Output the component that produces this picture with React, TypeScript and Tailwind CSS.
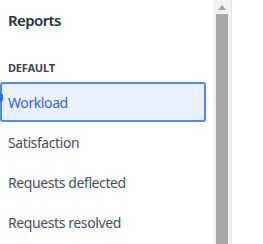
export default function App() {
  const items = ["Satisfaction", "Requests deflected", "Requests resolved"];
  return (
    <div
      className="flex h-[244px] w-[263px] overflow-hidden bg-white"
      style={{ fontFamily: '"Noto Sans", "Open Sans", sans-serif' }}
    >
      <div className="flex w-[213px] shrink-0 flex-col">
        <div className="px-2 pt-[10px] text-[15px] font-semibold leading-[20px] tracking-[-0.6px] text-[#26323f]">Reports</div>
        <div className="px-2 pt-[30px] text-[11px] font-bold leading-[16px] tracking-[-0.2px] text-[#3a4555]">DEFAULT</div>
        <div className="pt-[6px] pr-[7px]">
          <div className="relative flex h-[40px] items-center rounded-[3px] border-2 border-[#4a8cf7] bg-[#e8f1fd] pl-[6px] text-[14px] tracking-[-0.4px] text-[#3d63dd]">
            <span className="absolute left-[-2px] top-[9px] h-[9px] w-[3px] rounded-r-full bg-[#2f6fe6]" />
            Workload
          </div>
          {items.map((t) => (
            <div key={t} className="flex h-[40px] items-center pl-2 text-[14px] tracking-[-0.4px] text-[#46505c]">
              {t}
            </div>
          ))}
        </div>
      </div>
      <div className="flex w-[18px] shrink-0 flex-col items-center bg-[#f1f1f1]">
        <div className="flex h-[14px] w-full items-center justify-center">
          <svg width="8" height="5" viewBox="0 0 8 5">
            <path d="M4 0 L8 5 L0 5 Z" fill="#a3a3a3" />
          </svg>
        </div>
        <div className="h-[230px] w-[12px] bg-[#a8a8a8]" />
      </div>
      <div className="w-px shrink-0 bg-[#e6e6f0]" />
      <div className="flex-1 bg-white" />
    </div>
  );
}
